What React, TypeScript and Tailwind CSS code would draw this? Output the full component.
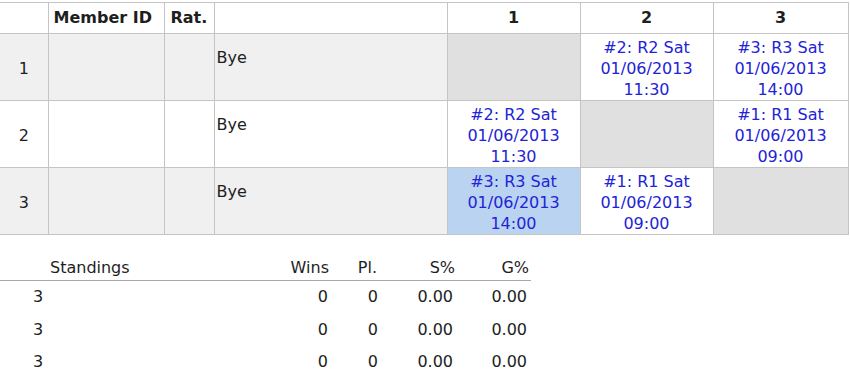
import * as React from "react";

type Cell = { lines?: string[]; self?: boolean; selected?: boolean };

const rows: { idx: number; name: string; bg: string; cells: Cell[] }[] = [
  {
    idx: 1,
    name: "Bye",
    bg: "bg-[#f0f0f0]",
    cells: [
      { self: true },
      { lines: ["#2: R2 Sat", "01/06/2013", "11:30"] },
      { lines: ["#3: R3 Sat", "01/06/2013", "14:00"] },
    ],
  },
  {
    idx: 2,
    name: "Bye",
    bg: "bg-white",
    cells: [
      { lines: ["#2: R2 Sat", "01/06/2013", "11:30"] },
      { self: true },
      { lines: ["#1: R1 Sat", "01/06/2013", "09:00"] },
    ],
  },
  {
    idx: 3,
    name: "Bye",
    bg: "bg-[#f0f0f0]",
    cells: [
      { lines: ["#3: R3 Sat", "01/06/2013", "14:00"], selected: true },
      { lines: ["#1: R1 Sat", "01/06/2013", "09:00"] },
      { self: true },
    ],
  },
];

const standings = [
  { place: "3", wins: "0", played: "0", s: "0.00", g: "0.00" },
  { place: "3", wins: "0", played: "0", s: "0.00", g: "0.00" },
  { place: "3", wins: "0", played: "0", s: "0.00", g: "0.00" },
];

export default function App() {
  return (
    <div
      className="w-[850px] h-[383px] bg-white text-[16px] text-[#1e1e1e] overflow-hidden"
      style={{ fontFamily: '"DejaVu Sans", Verdana, sans-serif' }}
    >
      {/* cross table */}
      <table className="mt-[2px] w-[848px] table-fixed border-collapse">
        <colgroup>
          <col className="w-[48px]" />
          <col className="w-[116px]" />
          <col className="w-[50px]" />
          <col className="w-[233px]" />
          <col className="w-[133px]" />
          <col className="w-[133px]" />
          <col className="w-[135px]" />
        </colgroup>
        <thead>
          <tr className="h-[31px] font-bold">
            <th className="border-t border-r border-b border-[#c4c4c4]" />
            <th className="border border-[#c4c4c4] text-left pl-[5px]">Member ID</th>
            <th className="border border-[#c4c4c4] text-left pl-[6px]">Rat.</th>
            <th className="border border-[#c4c4c4]" />
            <th className="border border-[#c4c4c4] text-center">1</th>
            <th className="border border-[#c4c4c4] text-center">2</th>
            <th className="border border-[#c4c4c4] text-center">3</th>
          </tr>
        </thead>
        <tbody>
          {rows.map((r) => (
            <tr key={r.idx} className={`h-[67px] ${r.bg}`}>
              <td className="border-t border-r border-b border-[#c4c4c4] text-center align-middle pt-[4px]">
                {r.idx}
              </td>
              <td className="border border-[#c4c4c4]" />
              <td className="border border-[#c4c4c4]" />
              <td className="border border-[#c4c4c4] align-top pt-[12px] pl-[2px]">{r.name}</td>
              {r.cells.map((c, i) => (
                <td
                  key={i}
                  className={`border border-[#c4c4c4] align-top text-center pt-[3px] leading-[21px] text-[#2323d6] ${
                    c.self ? "bg-[#e0e0e0]" : c.selected ? "bg-[#b9d3f0]" : "bg-white"
                  }`}
                >
                  {c.lines?.map((l) => (
                    <div key={l}>{l}</div>
                  ))}
                </td>
              ))}
            </tr>
          ))}
        </tbody>
      </table>

      {/* standings */}
      <div className="mt-[21px] w-[531px]">
        <div className="grid grid-cols-[48px_1fr_60px_49px_76px_75px] items-end h-[25px] pb-[3px] border-b border-[#a8a8a8]">
          <div />
          <div className="pl-[2px]">Standings</div>
          <div className="text-right pr-[2px]">Wins</div>
          <div className="text-right pr-[3px]">Pl.</div>
          <div className="text-right pr-[1px]">S%</div>
          <div className="text-right pr-[2px]">G%</div>
        </div>
        {standings.map((s, i) => (
          <div key={i} className="grid grid-cols-[48px_1fr_60px_49px_76px_75px] items-center h-[32.5px]">
            <div className="pl-[33px]">{s.place}</div>
            <div />
            <div className="text-right pr-[3px]">{s.wins}</div>
            <div className="text-right pr-[2px]">{s.played}</div>
            <div className="text-right pr-[3px]">{s.s}</div>
            <div className="text-right pr-[4px]">{s.g}</div>
          </div>
        ))}
      </div>
    </div>
  );
}
